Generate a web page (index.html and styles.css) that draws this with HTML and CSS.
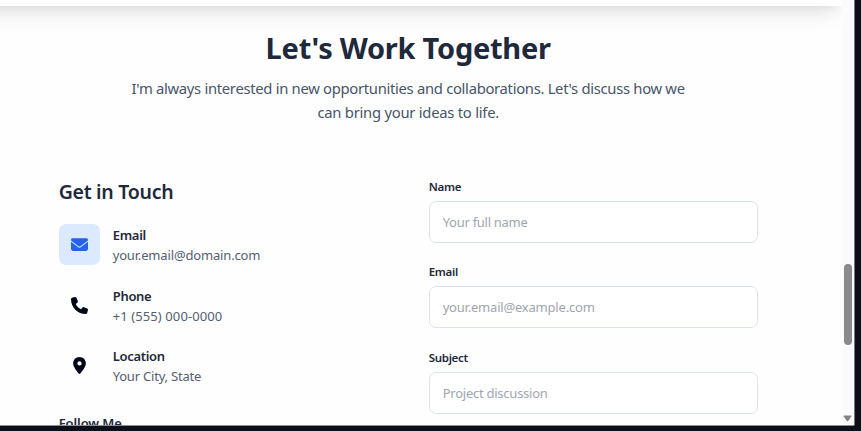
FILE: index.html
```
<!DOCTYPE html>
<html lang="en">
<head>
<meta charset="utf-8">
<title>Contact</title>
<link rel="stylesheet" href="styles.css">
</head>
<body>
<div class="window">
  <div class="page">
    <div class="previous"></div>
    <main class="contact">
      <header class="intro">
        <h1>Let's Work Together</h1>
        <p>I'm always interested in new opportunities and collaborations. Let's discuss how we<br><span class="second">can bring your ideas to life.</span></p>
      </header>
      <div class="columns">
        <section class="details">
          <h2>Get in Touch</h2>
          <div class="item">
            <span class="icon boxed"><svg width="17" height="17" viewBox="0 0 512 512"><path d="M48 64C21.500 64 0 85.500 0 112c0 15.100 7.100 29.300 19.200 38.400L236.800 313.600c11.400 8.500 27 8.500 38.400 0L492.800 150.400c12.100-9.100 19.200-23.300 19.200-38.400c0-26.500-21.500-48-48-48H48zM0 176V384c0 35.300 28.700 64 64 64H448c35.300 0 64-28.700 64-64V176L294.400 339.200c-22.800 17.100-54 17.100-76.800 0L0 176z"/></svg></span>
            <div><h3>Email</h3><p class="mail">your.email@domain.com</p></div>
          </div>
          <div class="item">
            <span class="icon"><svg width="17" height="17" viewBox="0 0 512 512"><path d="M164.900 24.600c-7.700-18.600-28-28.500-47.400-23.200l-88 24C12.100 30.200 0 46 0 64C0 311.400 200.600 512 448 512c18 0 33.800-12.100 38.600-29.500l24-88c5.300-19.400-4.600-39.700-23.200-47.400l-96-40c-16.300-6.800-35.200-2.100-46.300 11.600L304.700 368C234.300 334.700 177.300 277.700 144 207.300L193.300 167c13.700-11.200 18.400-30 11.600-46.300l-40-96z"/></svg></span>
            <div><h3>Phone</h3><p class="phone">+1 (555) 000-0000</p></div>
          </div>
          <div class="item">
            <span class="icon"><svg width="13" height="17" viewBox="0 0 384 512"><path d="M215.700 499.200C267 435 384 279.400 384 192C384 86 298 0 192 0S0 86 0 192c0 87.400 117 243 168.300 307.200c12.300 15.300 35.100 15.300 47.400 0zM192 128a64 64 0 1 1 0 128 64 64 0 1 1 0-128z"/></svg></span>
            <div><h3>Location</h3><p class="city">Your City, State</p></div>
          </div>
          <h3 class="follow">Follow Me</h3>
        </section>
        <form class="form">
          <div class="field"><label for="name">Name</label><input id="name" class="in-name" placeholder="Your full name"></div>
          <div class="field"><label for="email">Email</label><input id="email" class="in-mail" placeholder="your.email@example.com"></div>
          <div class="field"><label for="subject">Subject</label><input id="subject" class="in-subject" placeholder="Project discussion"></div>
        </form>
      </div>
    </main>
  </div>
  <div class="scrollbar"><span class="thumb"></span><svg class="arrow" width="9" height="7" viewBox="0 0 9 7"><path d="M1 .5h7q.8 0 .4.800L5.200 6q-.7.800-1.400 0L.6 1.300Q.2.500 1 .5z"/></svg></div>
</div>
</body>
</html>
```

FILE: styles.css
```
* { box-sizing: border-box; margin: 0; padding: 0; }
body {
  width: 861px; height: 431px; overflow: hidden;
  background: #0d0e17;
  font-family: "Noto Sans", "Open Sans", sans-serif;
  color: #1e293b;
}
.window {
  display: flex;
  width: 855px; height: 426px;
  overflow: hidden;
  background: #fefefe;
  border-right: 1px solid #777b80;
  border-bottom: 1px solid #8b8d90;
  border-bottom-right-radius: 2px;
}
.page { width: 842px; height: 425px; overflow: hidden; display: flow-root; }
.previous {
  height: 206px; margin-top: -200px; margin-left: -25px;
  background: #fff;
  box-shadow: 0 10px 20px -5px rgba(0,0,0,.13), 0 5px 9px -5px rgba(0,0,0,.06);
}
.contact { width: 699px; margin-left: 58.700px; padding-top: 22px; }
.intro { text-align: center; white-space: nowrap; }
h1 { font-size: 29px; line-height: 40px; font-weight: 700; letter-spacing: -.25px; }
.intro p { margin-top: 8px; font-size: 14.800px; line-height: 24px; color: #475569; letter-spacing: -.3px; }
.second { letter-spacing: -.25px; }
.columns { display: grid; grid-template-columns: 329px 329.500px; column-gap: 41px; margin-top: 54px; }
h2 { font-size: 19.500px; line-height: 27px; font-weight: 600; letter-spacing: -.28px; margin-bottom: 19px; }
.item { display: flex; gap: 13px; height: 41px; margin-bottom: 19.500px; white-space: nowrap; }
.icon { width: 41px; height: 41px; display: flex; align-items: center; justify-content: center; border-radius: 7px; fill: #020617; }
.boxed { background: #dbeafe; fill: #2563eb; }
h3 { font-size: 13px; line-height: 20px; font-weight: 600; letter-spacing: -.3px; }
.item p { font-size: 13px; line-height: 20px; color: #536072; letter-spacing: -.2px; }
.item .mail { letter-spacing: -.16px; }
.item .phone { letter-spacing: .1px; }
.item h3 { margin-top: 1px; }
.follow { margin-top: 27px; }
.item + .follow { letter-spacing: -.1px; }
.field { height: 85.400px; }
label { display: block; font-size: 11.500px; line-height: 17px; font-weight: 600; margin-bottom: 6px; letter-spacing: -.3px; }
input {
  display: block; width: 329.500px; height: 42px; padding: 0 13px;
  border: 1px solid #dde3ed; border-radius: 7px; background: #fff;
  font: 13px "Noto Sans", sans-serif; letter-spacing: -.2px;
}
input::placeholder { color: #a1a5af; opacity: 1; }
.in-name { letter-spacing: -.28px; }
.in-subject { letter-spacing: -.25px; }
.scrollbar { width: 12px; height: 425px; padding: 264px 0 0 2px; background: #fbfbfb; }
.thumb { display: block; width: 8px; height: 81px; border-radius: 4px; background: #8b8b8b; }
.arrow { display: block; margin: 70px 0 0 -1px; fill: #858585; }
```
